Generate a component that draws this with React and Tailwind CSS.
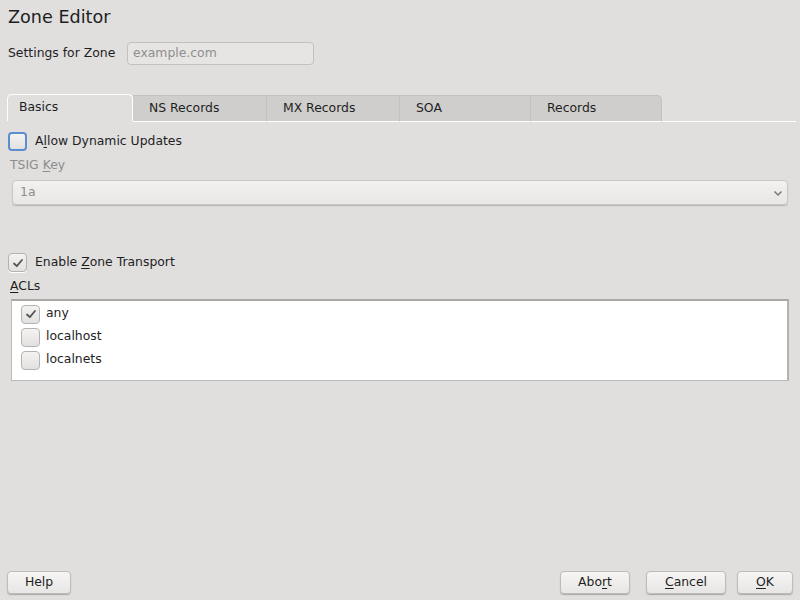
import React from 'react';

const tabs = ['Basics', 'NS Records', 'MX Records', 'SOA', 'Records'];
const tabWidths = ['w-[126px]', 'w-[134px]', 'w-[133px]', 'w-[131px]', 'w-[131px]'];

const acls = [
  { name: 'any', checked: true },
  { name: 'localhost', checked: false },
  { name: 'localnets', checked: false }
];

const Check = () => (
  <svg width="12" height="12" viewBox="0 0 12 12" fill="none">
    <path d="M2 6.5 L4.8 9.2 L10 3" stroke="#555" strokeWidth="1.8" strokeLinecap="round" strokeLinejoin="round" />
  </svg>
);

const Checkbox = ({ checked, focused }) => (
  <div
    className={`w-[19px] h-[19px] rounded-[4px] flex items-center justify-center bg-gradient-to-b from-[#f4f3f2] to-[#e2e1e0] ${
      focused ? 'border-2 border-[#5b8dd0]' : 'border border-[#b4b3b2] shadow-[0_1px_0_#fff]'
    }`}
  >
    {checked && <Check />}
  </div>
);

const Button = ({ children, width }) => (
  <button
    className={`${width} h-[23px] rounded-[4px] border border-[#bdbcbb] bg-gradient-to-b from-[#f6f5f4] to-[#e7e6e5] shadow-[0_1px_1px_rgba(0,0,0,0.25)] text-[12.4px] text-[#1e1e1e]`}
  >
    {children}
  </button>
);

const App = () => {
  return (
    <div
      className="w-[800px] h-[600px] bg-[#e0dfde] flex flex-col text-[12.4px] text-[#1e1e1e] overflow-hidden"
      style={{ fontFamily: '"DejaVu Sans", sans-serif' }}
    >
      <h1 className="text-[17.6px] leading-none pl-[8px] pt-[9px]">Zone Editor</h1>

      <div className="flex items-center pl-[8px] mt-[15px]">
        <span className="w-[119px]">Settings for Zone</span>
        <div className="w-[187px] h-[23px] rounded-[4px] border border-[#c2c1c0] bg-[#e6e5e4] flex items-center pl-[5px] text-[#8f8e8d]">
          example.com
        </div>
      </div>

      {/* tabs */}
      <div className="mt-[29px] flex pl-[7px]">
        {tabs.map((t, i) => (
          <div
            key={t}
            className={`${tabWidths[i]} h-[27px] flex items-center pl-[11px] ${
              i === 0
                ? 'bg-[#e0dfde] border-t border-l border-r border-white rounded-t-[5px]'
                : 'bg-[#cfcecd] border-t border-r border-[#c3c2c1] mt-[1px] h-[26px] pl-[16px] border-b border-b-white'
            } ${i === tabs.length - 1 ? 'rounded-tr-[5px]' : ''}`}
          >
            {t}
          </div>
        ))}
        <div className="flex-1 border-b border-white mr-[4px]" />
      </div>

      <div className="flex flex-col">
        <div className="flex items-center gap-[8px] pl-[8px] mt-[10px]">
          <Checkbox focused />
          <span>
            A<span className="underline underline-offset-2">l</span>low Dynamic Updates
          </span>
        </div>
        <div className="pl-[10px] mt-[5px] text-[#8e8d8c]">
          TSIG <span className="underline underline-offset-2">K</span>ey
        </div>
        <div className="mx-[12px] mt-[6px] h-[25px] rounded-[4px] border border-[#c9c8c7] bg-gradient-to-b from-[#f2f1f0] to-[#e8e7e6] shadow-[0_1px_1px_rgba(0,0,0,0.2)] flex items-center justify-between pl-[7px] pr-[4px] text-[#8e8d8c]">
          <span>1a</span>
          <svg width="10" height="8" viewBox="0 0 10 8">
            <path d="M1.5 2.5 L5 6 L8.5 2.5" stroke="#777" strokeWidth="1.5" fill="none" />
          </svg>
        </div>

        <div className="flex items-center gap-[8px] pl-[8px] mt-[48px]">
          <Checkbox checked />
          <span>
            Enable <span className="underline underline-offset-2">Z</span>one Transport
          </span>
        </div>
        <div className="pl-[10px] mt-[5px]">
          <span className="underline underline-offset-2">A</span>CLs
        </div>
        <div className="mx-[11px] mt-[3px] h-[82px] bg-white border border-[#bcbbba] border-t-2 border-t-[#a9a8a7] border-r-2 border-r-[#b3b2b1] pt-[4px] pl-[9px] flex flex-col gap-[4px]">
          {acls.map((a) => (
            <div key={a.name} className="flex items-center gap-[6px] h-[19px]">
              <Checkbox checked={a.checked} />
              <span className="-mt-[2px]">{a.name}</span>
            </div>
          ))}
        </div>
      </div>

      <div className="mt-auto mb-[6px] flex items-center px-[7px]">
        <Button width="w-[64px]">Help</Button>
        <div className="flex-1" />
        <Button width="w-[70px]">
          Abo<span className="underline underline-offset-2">r</span>t
        </Button>
        <div className="w-[16px]" />
        <Button width="w-[80px]">
          <span className="underline underline-offset-2">C</span>ancel
        </Button>
        <div className="w-[11px]" />
        <Button width="w-[56px]">
          <span className="underline underline-offset-2">O</span>K
        </Button>
      </div>
    </div>
  );
};

export default App;
